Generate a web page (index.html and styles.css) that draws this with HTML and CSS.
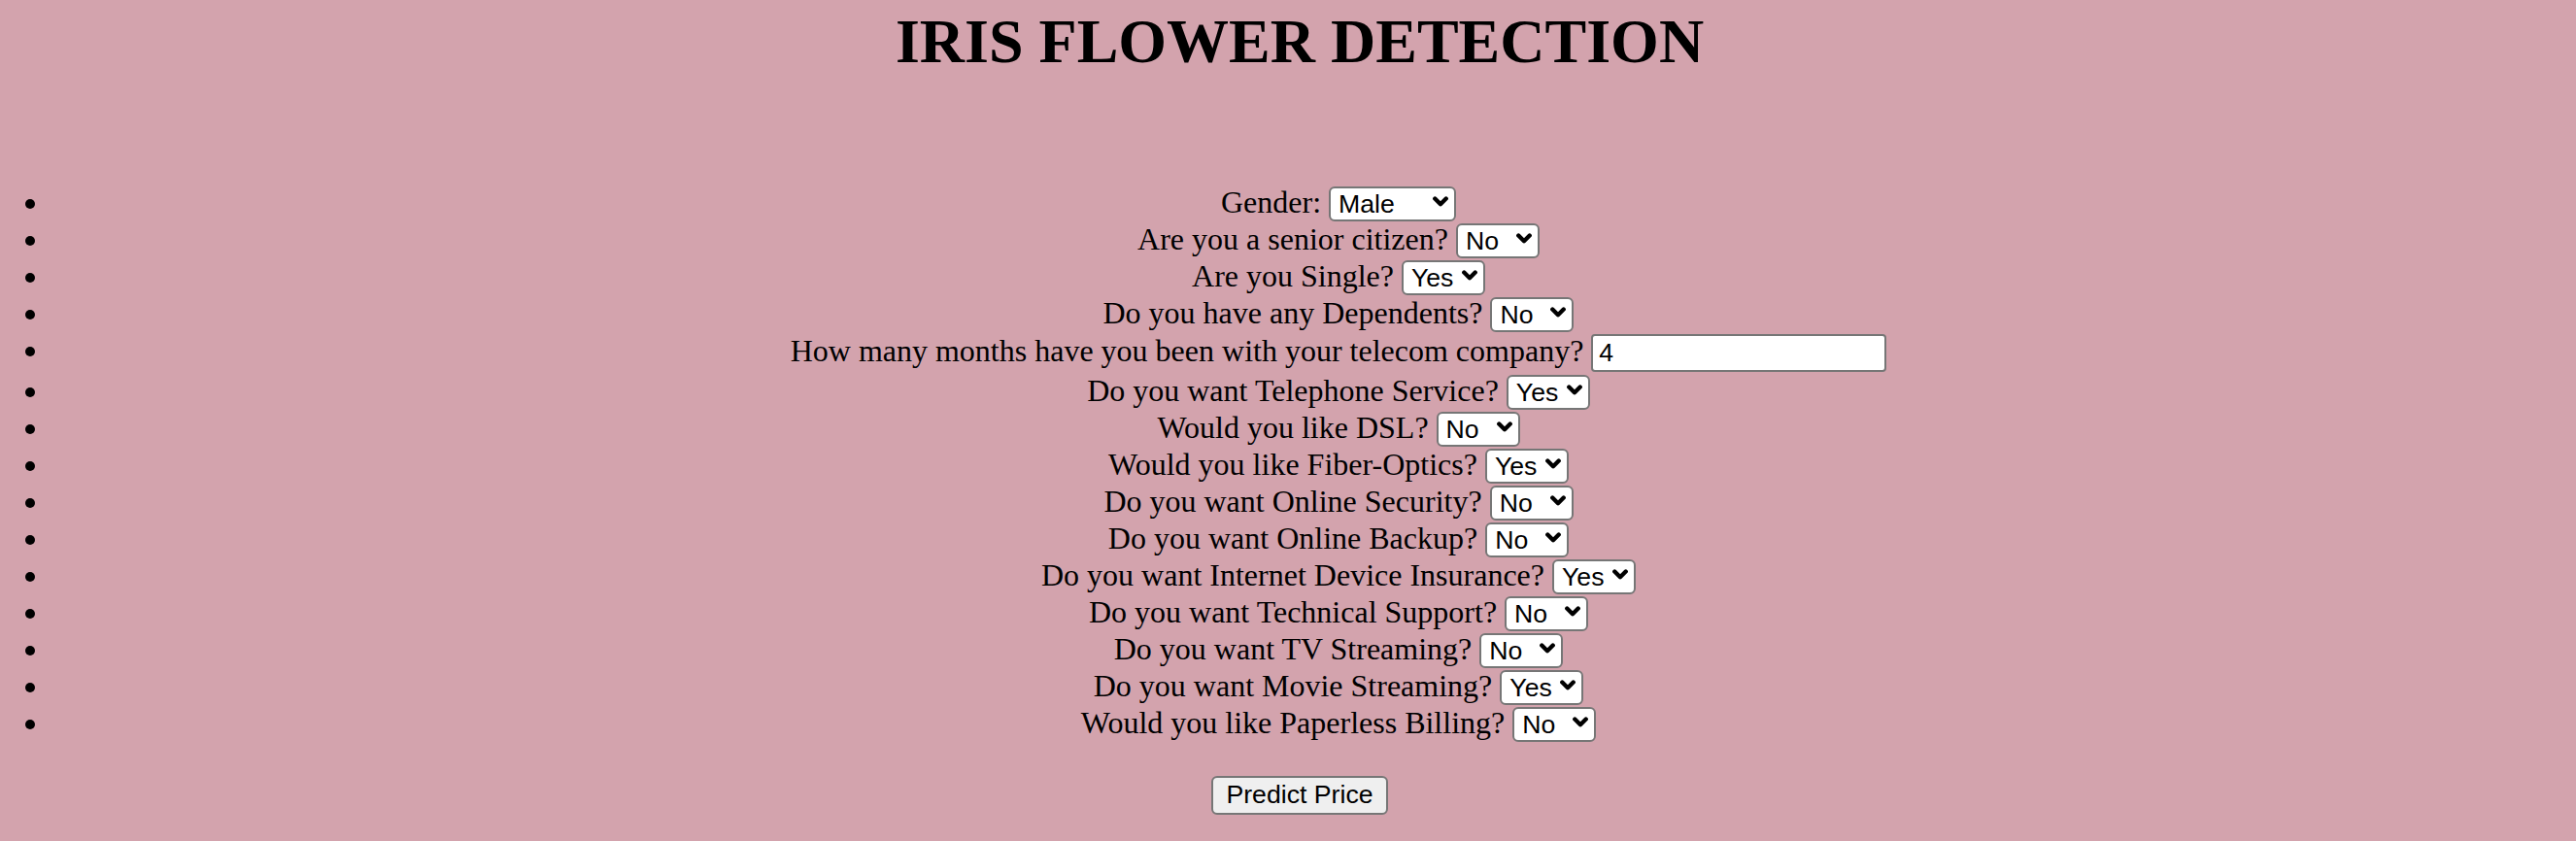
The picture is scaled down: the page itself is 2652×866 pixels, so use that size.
FILE: index.html
```html
<!DOCTYPE html>
<html>
<head>
<meta charset="utf-8">
<title>Iris Flower Detection</title>
<link rel="stylesheet" href="styles.css">
</head>
<body>
<h1 class="title">IRIS FLOWER DETECTION</h1>
<form class="form">
<ul class="questions">
<li class="q"><div class="qbody">Gender: <span class="sel"><select class="dd dd-wide"><option>Male</option><option>Female</option></select><svg class="chev" viewBox="0 0 14 10"><path d="M2 2 L7 7 L12 2"/></svg></span></div></li>
<li class="q"><div class="qbody">Are you a senior citizen? <span class="sel"><select class="dd"><option>No</option><option>Yes</option></select><svg class="chev" viewBox="0 0 14 10"><path d="M2 2 L7 7 L12 2"/></svg></span></div></li>
<li class="q"><div class="qbody">Are you Single? <span class="sel"><select class="dd"><option>Yes</option><option>No</option></select><svg class="chev" viewBox="0 0 14 10"><path d="M2 2 L7 7 L12 2"/></svg></span></div></li>
<li class="q"><div class="qbody">Do you have any Dependents? <span class="sel"><select class="dd"><option>No</option><option>Yes</option></select><svg class="chev" viewBox="0 0 14 10"><path d="M2 2 L7 7 L12 2"/></svg></span></div></li>
<li class="q"><div class="qbody">How many months have you been with your telecom company? <input class="txt" type="text" value="4"></div></li>
<li class="q"><div class="qbody">Do you want Telephone Service? <span class="sel"><select class="dd"><option>Yes</option><option>No</option></select><svg class="chev" viewBox="0 0 14 10"><path d="M2 2 L7 7 L12 2"/></svg></span></div></li>
<li class="q"><div class="qbody">Would you like DSL? <span class="sel"><select class="dd"><option>No</option><option>Yes</option></select><svg class="chev" viewBox="0 0 14 10"><path d="M2 2 L7 7 L12 2"/></svg></span></div></li>
<li class="q"><div class="qbody">Would you like Fiber-Optics? <span class="sel"><select class="dd"><option>Yes</option><option>No</option></select><svg class="chev" viewBox="0 0 14 10"><path d="M2 2 L7 7 L12 2"/></svg></span></div></li>
<li class="q"><div class="qbody">Do you want Online Security? <span class="sel"><select class="dd"><option>No</option><option>Yes</option></select><svg class="chev" viewBox="0 0 14 10"><path d="M2 2 L7 7 L12 2"/></svg></span></div></li>
<li class="q"><div class="qbody">Do you want Online Backup? <span class="sel"><select class="dd"><option>No</option><option>Yes</option></select><svg class="chev" viewBox="0 0 14 10"><path d="M2 2 L7 7 L12 2"/></svg></span></div></li>
<li class="q"><div class="qbody">Do you want Internet Device Insurance? <span class="sel"><select class="dd"><option>Yes</option><option>No</option></select><svg class="chev" viewBox="0 0 14 10"><path d="M2 2 L7 7 L12 2"/></svg></span></div></li>
<li class="q"><div class="qbody">Do you want Technical Support? <span class="sel"><select class="dd"><option>No</option><option>Yes</option></select><svg class="chev" viewBox="0 0 14 10"><path d="M2 2 L7 7 L12 2"/></svg></span></div></li>
<li class="q"><div class="qbody">Do you want TV Streaming? <span class="sel"><select class="dd"><option>No</option><option>Yes</option></select><svg class="chev" viewBox="0 0 14 10"><path d="M2 2 L7 7 L12 2"/></svg></span></div></li>
<li class="q"><div class="qbody">Do you want Movie Streaming? <span class="sel"><select class="dd"><option>Yes</option><option>No</option></select><svg class="chev" viewBox="0 0 14 10"><path d="M2 2 L7 7 L12 2"/></svg></span></div></li>
<li class="q"><div class="qbody">Would you like Paperless Billing? <span class="sel"><select class="dd"><option>No</option><option>Yes</option></select><svg class="chev" viewBox="0 0 14 10"><path d="M2 2 L7 7 L12 2"/></svg></span></div></li>
</ul>
<div class="actions"><button class="btn" type="button">Predict Price</button></div>
</form>
</body>
</html>
```

FILE: styles.css
```css
html {
  background: #d3a3ad;
}
body {
  margin: 0 16px;
  font-family: "Liberation Serif", "Times New Roman", serif;
  font-size: 32px;
  color: #000;
  text-align: center;
}
.title {
  font-size: 64px;
  font-weight: bold;
  margin: 6px 0 110px;
  padding-left: 24px;
}
.form {
  margin: 0;
}
.questions {
  margin: 0;
  padding: 0;
  list-style: none;
}
.q {
  display: grid;
  grid-template-columns: 104px 1fr;
}
.q::before {
  content: "";
  width: 10px;
  height: 10px;
  margin: 15px 0 0 10px;
  border-radius: 50%;
  background: #000;
}
.qbody {
  text-align: center;
}
.sel {
  position: relative;
  display: inline-block;
}
.dd {
  -webkit-appearance: none;
  appearance: none;
  box-sizing: border-box;
  width: 86px;
  height: 36px;
  margin: 0;
  padding: 0 0 0 8px;
  border: 2px solid #767676;
  border-radius: 6px;
  background: #fff;
  color: #000;
  font-family: "Liberation Sans", Arial, sans-serif;
  font-size: 26.67px;
  text-align: left;
}
.dd-wide {
  width: 131px;
}
.chev {
  position: absolute;
  right: 8px;
  top: 12px;
  width: 16px;
  height: 12px;
  pointer-events: none;
}
.chev path {
  fill: none;
  stroke: #000;
  stroke-width: 3.8;
  stroke-linecap: round;
  stroke-linejoin: round;
}
.txt {
  box-sizing: border-box;
  width: 304px;
  height: 39px;
  margin: 2px 0 1px;
  padding: 0 6px;
  border: 2px solid #767676;
  border-radius: 4px;
  background: #fff;
  color: #000;
  font-family: "Liberation Sans", Arial, sans-serif;
  font-size: 26.67px;
}
.actions {
  margin-top: 34px;
  padding-left: 24px;
}
.btn {
  box-sizing: border-box;
  width: 182px;
  height: 40px;
  margin: 0;
  padding: 0;
  border: 2px solid #767676;
  border-radius: 6px;
  background: #efefef;
  color: #000;
  font-family: "Liberation Sans", Arial, sans-serif;
  font-size: 26.67px;
}
```
